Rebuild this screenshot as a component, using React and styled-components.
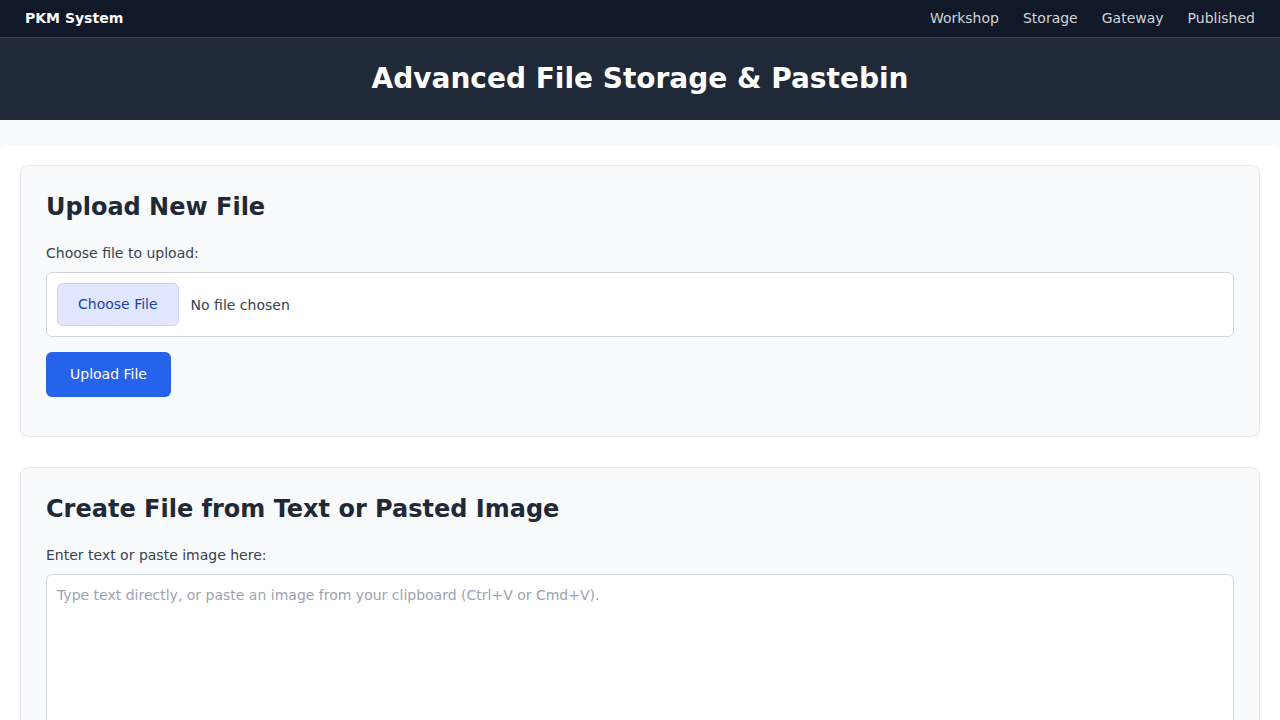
import React from "react";
import styled, { createGlobalStyle } from "styled-components";

const GlobalStyle = createGlobalStyle`
  html, body { margin: 0; padding: 0; }
  body {
    background: #f8f9fa;
    font-family: "DejaVu Sans", "Liberation Sans", sans-serif;
    color: #1f2937;
  }
  * { box-sizing: border-box; }
`;

const TopNav = styled.nav`
  height: 38px;
  background: #111827;
  border-bottom: 1px solid #374151;
  display: flex;
  align-items: center;
  justify-content: space-between;
  padding: 0 25px 2px;
`;

const Brand = styled.div`
  color: #ffffff;
  font-weight: bold;
  font-size: 14px;
`;

const NavLinks = styled.div`
  display: flex;
  gap: 24px;
`;

const NavLink = styled.a`
  color: #d1d5db;
  font-size: 14px;
  text-decoration: none;
`;

const Header = styled.header`
  background: #1f2937;
  padding: 24px 20px;
  text-align: center;
`;

const Title = styled.h1`
  margin: 0;
  color: #ffffff;
  font-size: 28px;
  line-height: 34px;
  font-weight: bold;
`;

const Container = styled.main`
  margin-top: 25px;
  background: #ffffff;
  border-radius: 8px;
  padding: 20px;
  display: flex;
  flex-direction: column;
  gap: 30px;
`;

const Card = styled.section`
  background: #f9fafb;
  border: 1px solid #e5e7eb;
  border-radius: 8px;
  padding: 25px 25px ${(p) => p.$bottom || 25}px;
`;

const CardTitle = styled.h2`
  margin: 2px 0 21px;
  font-size: 24px;
  line-height: 29px;
  font-weight: bold;
  color: #1f2937;
`;

const Label = styled.label`
  display: block;
  font-size: 14px;
  line-height: 21px;
  color: #374151;
  margin-bottom: 8px;
`;

const FileBox = styled.div`
  display: flex;
  align-items: center;
  gap: 12px;
  background: #ffffff;
  border: 1px solid #d1d5db;
  border-radius: 6px;
  padding: 10px;
`;

const ChooseButton = styled.button`
  font-family: inherit;
  font-size: 14px;
  line-height: 17px;
  padding: 12px 20px;
  background: #e0e7ff;
  color: #1e40af;
  border: 1px solid #c7d2fe;
  border-radius: 6px;
`;

const FileStatus = styled.span`
  font-size: 14px;
  color: #374151;
`;

const PrimaryButton = styled.button`
  margin-top: 15px;
  font-family: inherit;
  font-size: 14px;
  line-height: 21px;
  padding: 12px 24px;
  background: #2563eb;
  color: #ffffff;
  border: none;
  border-radius: 6px;
`;

const TextArea = styled.textarea`
  display: block;
  width: 100%;
  height: 220px;
  font-family: inherit;
  font-size: 14px;
  line-height: 21px;
  padding: 10px;
  background: #ffffff;
  border: 1px solid #d1d5db;
  border-radius: 6px;
  resize: vertical;
  color: #1f2937;
  &::placeholder { color: #9ca3af; }
`;

export default function App() {
  return (
    <>
      <GlobalStyle />
      <TopNav>
        <Brand>PKM System</Brand>
        <NavLinks>
          <NavLink href="#">Workshop</NavLink>
          <NavLink href="#">Storage</NavLink>
          <NavLink href="#">Gateway</NavLink>
          <NavLink href="#">Published</NavLink>
        </NavLinks>
      </TopNav>
      <Header>
        <Title>Advanced File Storage &amp; Pastebin</Title>
      </Header>
      <Container>
        <Card $bottom={39}>
          <CardTitle>Upload New File</CardTitle>
          <Label>Choose file to upload:</Label>
          <FileBox>
            <ChooseButton type="button">Choose File</ChooseButton>
            <FileStatus>No file chosen</FileStatus>
          </FileBox>
          <PrimaryButton type="button">Upload File</PrimaryButton>
        </Card>
        <Card>
          <CardTitle>Create File from Text or Pasted Image</CardTitle>
          <Label>Enter text or paste image here:</Label>
          <TextArea placeholder="Type text directly, or paste an image from your clipboard (Ctrl+V or Cmd+V)." />
        </Card>
      </Container>
    </>
  );
}
